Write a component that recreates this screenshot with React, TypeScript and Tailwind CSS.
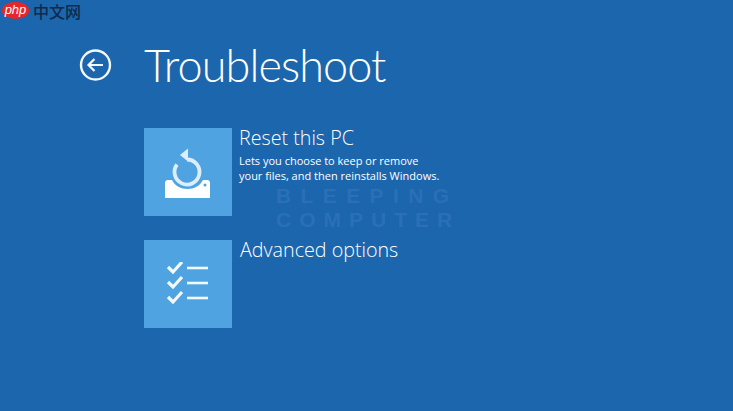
const FONT = "font-['Open_Sans','Noto_Sans',sans-serif]";

const Logo = () => (
  <div className="absolute left-0 top-0 flex items-center h-[20px] pl-[2px] pt-[1px]">
    <div className="w-[27px] h-[17px] rounded-[50%] bg-[#e8262a] flex items-center justify-center">
      <span className="text-white text-[13px] italic font-['Liberation_Sans',sans-serif] leading-none pb-[2px]">php</span>
    </div>
    <span className="ml-[4px] text-[#0f2a4a] text-[16px] leading-none font-['Noto_Sans_CJK_SC',sans-serif] font-medium">中文网</span>
  </div>
);

const BackIcon = () => (
  <svg width="34" height="34" viewBox="0 0 34 34" fill="none" stroke="#f2f8fd">
    <circle cx="16.5" cy="17" r="14.5" strokeWidth="2.4" />
    <path d="M24 17H9.5M15.5 11l-6 6 6 6" strokeWidth="2.2" />
  </svg>
);

const ResetIcon = () => (
  <svg width="60" height="56" viewBox="0 0 60 56" fill="none">
    <path d="M29 15.5A12.5 12.5 0 1 1 19 20.5" stroke="#dceefa" strokeWidth="3.8" />
    <path d="M22 11l8-6.5v13z" fill="#dceefa" />
    <path d="M10 36h4c3 6 9 9 15.500 9s12.500-3 15.500-9h4c2 0 3 1 3 3v15H7V39c0-2 1-3 3-3z" fill="#ffffff" />
    <circle cx="47" cy="41" r="1.500" fill="#4fa3e0" />
  </svg>
);

const ChecksIcon = () => (
  <svg width="44" height="44" viewBox="0 0 44 44" fill="none" stroke="#f4f9fd">
    {[6, 21, 36].map((y) => (
      <g key={y}>
        <path d={`M2 ${y - 1}l5 5 9-10`} strokeWidth="3.2" />
        <path d={`M21 ${y}h21`} strokeWidth="2.6" />
      </g>
    ))}
  </svg>
);

const Tile = ({ icon, title, desc, textPad }: { icon: React.ReactNode; title: string; desc?: string[]; textPad: string }) => (
  <div className="flex items-start">
    <div className="w-[88px] h-[88px] bg-[#4fa3e0] flex items-center justify-center shrink-0">{icon}</div>
    <div className={`${textPad} text-white`}>
      <div className="text-[19.7px] leading-[20px] font-light">{title}</div>
      {desc && (
        <div className="mt-[5px] text-[11px] leading-[15px]">
          {desc.map((line) => (
            <div key={line}>{line}</div>
          ))}
        </div>
      )}
    </div>
  </div>
);

export default function App() {
  return (
    <div className={`relative w-[733px] h-[411px] overflow-hidden bg-[#1c66ae] ${FONT}`}>
      <Logo />
      {/* watermark */}
      <div className="absolute left-[276px] top-[184px] text-[#2a70b6] font-['Liberation_Sans',sans-serif] font-bold text-[21px] leading-[24px]">
        <div className="tracking-[9.4px]">BLEEPING</div>
        <div className="tracking-[8px]">COMPUTER</div>
      </div>

      <div className="relative pl-[79px] pt-[35px]">
        <div className="flex items-center h-[60px]">
          <div className="w-[65px]">
            <BackIcon />
          </div>
          <h1 className="text-[45px] leading-[60px] tracking-[-0.9px] font-light text-white font-['Lato',sans-serif]">Troubleshoot</h1>
        </div>
        <div className="flex flex-col gap-[24px] pl-[65px] mt-[33px]">
          <Tile
            icon={<ResetIcon />}
            title="Reset this PC"
            desc={["Lets you choose to keep or remove", "your files, and then reinstalls Windows."]}
            textPad="pl-[7px]"
          />
          <Tile icon={<ChecksIcon />} title="Advanced options" textPad="pl-[8px]" />
        </div>
      </div>
    </div>
  );
}
